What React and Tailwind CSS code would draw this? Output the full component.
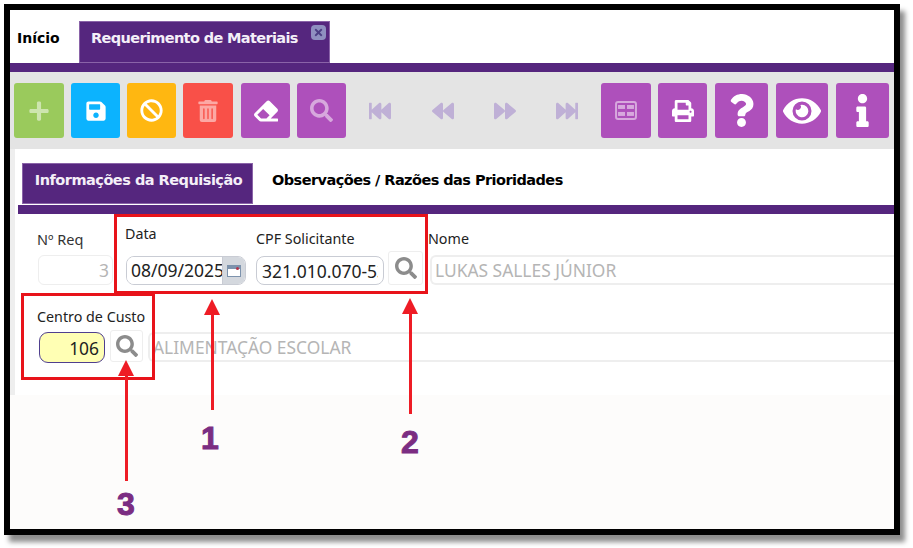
import React from "react";
import {
  FaPlus,
  FaSave,
  FaBan,
  FaTrashAlt,
  FaEraser,
  FaSearch,
  FaFastBackward,
  FaBackward,
  FaForward,
  FaFastForward,
  FaPrint,
  FaQuestion,
  FaEye,
  FaInfo,
  FaTimes,
} from "react-icons/fa";

function GridIcon({ className, size }) {
  return (
    <svg className={className} width={size} height={size * 0.86} viewBox="0 0 22 19" fill="none">
      <rect x="1" y="1" width="20" height="17" rx="2" stroke="currentColor" strokeWidth="2" />
      <rect x="3" y="4" width="7" height="4" fill="currentColor" />
      <rect x="12" y="4" width="7" height="4" fill="currentColor" />
      <rect x="3" y="11" width="7" height="4" fill="currentColor" />
      <rect x="12" y="11" width="7" height="4" fill="currentColor" />
    </svg>
  );
}

function ToolButton({ icon: Icon, color, width, size, dim }) {
  return (
    <button className={`flex h-[55px] shrink-0 items-center justify-center rounded-[3px] ${color} ${width}`}>
      <Icon className={dim ? "text-white/50" : "text-white"} size={size} />
    </button>
  );
}

function NavIcon({ icon: Icon, width }) {
  return (
    <div className={`flex shrink-0 items-center justify-center ${width}`}>
      <Icon className="text-[#bfb0d6]" size={22} />
    </div>
  );
}

function SearchButton({ className }) {
  return (
    <button className={`flex shrink-0 items-center justify-center rounded-[3px] border border-[#eeeeee] bg-white ${className}`}>
      <FaSearch className="text-[#8c8c8c]" size={22} />
    </button>
  );
}

function Arrow({ className }) {
  return (
    <div className={`absolute flex flex-col items-center ${className}`}>
      <div className="h-0 w-0 border-x-[8px] border-b-[16px] border-x-transparent border-b-[#ee1c25]" />
      <div className="w-[3px] flex-1 bg-[#ee1c25]" />
    </div>
  );
}

export default function App() {
  return (
    <div className="relative h-[548px] w-[913px] overflow-hidden bg-white font-['Noto_Sans',sans-serif]">
      <div className="ml-[4px] mt-[4px] flex h-[531px] w-[896px] flex-col border-[6px] border-black bg-[#fdfcfb] shadow-[5px_7px_5px_rgba(0,0,0,0.45)]">
        {/* Tabs */}
        <div className="flex h-[53px] items-end bg-white pl-[7px]">
          <div className="flex h-[42px] w-[62px] pt-[7px] font-['DejaVu_Sans',sans-serif] text-[14px] font-bold text-black">
            Início
          </div>
          <div className="relative h-[42px] w-[251px] border border-[#8a63a8] bg-[#55267e] pl-[11px] pt-[6px] font-['DejaVu_Sans',sans-serif] text-[14.5px] font-bold tracking-[-0.63px] text-[#f4eff8]">
            Requerimento de Materiais
            <span className="absolute right-[3px] top-[3px] flex h-[15px] w-[15px] items-center justify-center rounded-[4px] bg-[#8f8fc0]">
              <FaTimes className="text-[#4c3d84]" size={11} />
            </span>
          </div>
        </div>
        <div className="h-[9px] bg-[#55267e]" />

        {/* Toolbar */}
        <div className="flex h-[77px] items-center bg-[#e4e4e4] pl-[4px]">
          <ToolButton icon={FaPlus} color="bg-[#9aca5c]" width="w-[50px]" size={22} dim />
          <div className="w-[7px]" />
          <ToolButton icon={FaSave} color="bg-[#0cb3fe]" width="w-[49px]" size={22} />
          <div className="w-[7px]" />
          <ToolButton icon={FaBan} color="bg-[#ffb711]" width="w-[49px]" size={23} />
          <div className="w-[7px]" />
          <ToolButton icon={FaTrashAlt} color="bg-[#f95048]" width="w-[50px]" size={22} dim />
          <div className="w-[8px]" />
          <ToolButton icon={FaEraser} color="bg-[#ae50bb]" width="w-[49px]" size={24} />
          <div className="w-[7px]" />
          <ToolButton icon={FaSearch} color="bg-[#ae50bb]" width="w-[49px]" size={23} dim />
          <div className="w-[3px]" />
          <NavIcon icon={FaFastBackward} width="w-[62px]" />
          <NavIcon icon={FaBackward} width="w-[63px]" />
          <NavIcon icon={FaForward} width="w-[62px]" />
          <NavIcon icon={FaFastForward} width="w-[62px]" />
          <div className="w-[3px]" />
          <ToolButton icon={GridIcon} color="bg-[#ae50bb]" width="w-[50px]" size={22} dim />
          <div className="w-[7px]" />
          <ToolButton icon={FaPrint} color="bg-[#ae50bb]" width="w-[49px]" size={22} />
          <div className="w-[8px]" />
          <ToolButton icon={FaQuestion} color="bg-[#ae50bb]" width="w-[53px]" size={33} />
          <div className="w-[8px]" />
          <ToolButton icon={FaEye} color="bg-[#ae50bb]" width="w-[52px]" size={38} />
          <div className="w-[8px]" />
          <ToolButton icon={FaInfo} color="bg-[#ae50bb]" width="w-[53px]" size={33} />
        </div>

        {/* Form */}
        <div className="flex h-[246px] bg-[#eeeeee] pl-[5px]">
          <div className="flex-1 bg-white pt-[14px]">
            <div className="flex h-[41px] pl-[7px]">
              <div className="flex w-[231px] items-center justify-center border border-[#8a63a8] bg-[#55267e] pb-[6px] pl-[2px] font-['DejaVu_Sans',sans-serif] text-[14.5px] font-bold tracking-[-0.5px] text-[#f4eff8]">
                Informações da Requisição
              </div>
              <div className="ml-[19px] pt-[7px] font-['DejaVu_Sans',sans-serif] text-[14.5px] font-bold tracking-[-0.55px] text-black">
                Observações / Razões das Prioridades
              </div>
            </div>
            <div className="ml-[3px] mt-[1px] h-[9px] bg-[#55267e]" />

            {/* Row 1 */}
            <div className="mt-[16px] flex h-[55px] items-end pl-[22px]">
              <div className="w-[89px]">
                <div className="mb-[4px] text-[14.5px] text-[#333333]">Nº Req</div>
                <input
                  readOnly
                  value="3"
                  className="ml-[1px] h-[30px] w-[75px] rounded-[6px] border border-[#eeeeee] px-[3px] text-right text-[17.4px] text-[#b5b5b5] outline-none"
                />
              </div>
              <div className="w-[130px]">
                <div className="mb-[12px] ml-[-1px] text-[14.3px] text-[#222222]">Data</div>
                <div className="flex h-[29px] w-[120px] overflow-hidden rounded-[8px] border border-[#c9ccd4]">
                  <input
                    readOnly
                    value="08/09/2025"
                    className="w-[95px] bg-white pl-[4px] text-[17.5px] text-[#222222] outline-none"
                  />
                  <div className="flex flex-1 items-center justify-center border-l border-[#c9ccd4] bg-[#d4d8de]">
                    <div className="relative h-[12px] w-[14px] border border-[#7d93ad] bg-white">
                      <div className="h-[3px] bg-[#7d93ad]" />
                      <div className="absolute right-[1px] top-[1px] h-[3px] w-[3px] rounded-full bg-[#b5344a]" />
                    </div>
                  </div>
                </div>
              </div>
              <div className="w-[132px]">
                <div className="mb-[7px] text-[14.3px] text-[#222222]">CPF Solicitante</div>
                <input
                  readOnly
                  value="321.010.070-53"
                  className="h-[29px] w-[128px] rounded-[8px] border border-[#c9ccd4] px-[5px] text-[17.5px] text-[#222222] outline-none"
                />
              </div>
              <SearchButton className="h-[34px] w-[35px]" />
              <div className="ml-[5px] flex-1">
                <div className="mb-[6px] text-[14.3px] text-[#222222]">Nome</div>
                <input
                  readOnly
                  value="LUKAS SALLES JÚNIOR"
                  className="ml-[2px] h-[30px] w-[calc(100%-2px)] rounded-l-[6px] border-y-2 border-l-2 border-[#eeeeee] px-[3px] text-[17.4px] text-[#b5b5b5] outline-none"
                />
              </div>
            </div>

            {/* Row 2 */}
            <div className="mt-[26px] flex h-[52px] items-end pl-[22px]">
              <div className="w-[73px]">
                <div className="mb-[5px] whitespace-nowrap text-[14.3px] text-[#222222]">Centro de Custo</div>
                <input
                  readOnly
                  value="106"
                  className="ml-[2px] h-[31px] w-[66px] rounded-[9px] border border-[#4f3f8f] bg-[#ffffb4] pl-[2px] pr-[5px] text-right text-[17.4px] text-[#222222] outline-none"
                />
              </div>
              <SearchButton className="mb-[1px] h-[32px] w-[33px]" />
              <input
                readOnly
                value="ALIMENTAÇÃO ESCOLAR"
                className="mb-[1px] ml-[5px] h-[30px] flex-1 rounded-l-[6px] border-y-2 border-l-2 border-[#eeeeee] pl-[3px] pr-[4px] text-[17.4px] text-[#b5b5b5] outline-none"
              />
            </div>
          </div>
        </div>
      </div>

      {/* Annotations */}
      <div className="absolute left-[114px] top-[214px] h-[80px] w-[314px] border-[3px] border-[#e8131a]" />
      <div className="absolute left-[21px] top-[293px] h-[87px] w-[134px] border-[3px] border-[#e8131a]" />
      <Arrow className="left-[204px] top-[299px] h-[111px] w-[16px]" />
      <Arrow className="left-[402px] top-[298px] h-[116px] w-[16px]" />
      <Arrow className="left-[118px] top-[360px] h-[121px] w-[16px]" />
      <span className="absolute left-[201px] top-[420px] font-['Liberation_Sans',sans-serif] text-[32px] leading-[36px] font-bold text-[#7b2d82] [-webkit-text-stroke:1px_#7b2d82]">1</span>
      <span className="absolute left-[401px] top-[424px] font-['Liberation_Sans',sans-serif] text-[32px] leading-[36px] font-bold text-[#7b2d82] [-webkit-text-stroke:1px_#7b2d82]">2</span>
      <span className="absolute left-[117px] top-[486px] font-['Liberation_Sans',sans-serif] text-[32px] leading-[36px] font-bold text-[#7b2d82] [-webkit-text-stroke:1px_#7b2d82]">3</span>
    </div>
  );
}
